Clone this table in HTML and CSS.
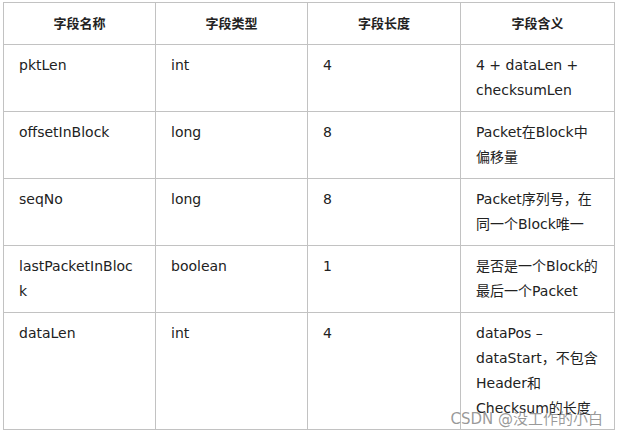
FILE: index.html
```html
<!DOCTYPE html>
<html lang="zh">
<head>
<meta charset="utf-8">
<link rel="stylesheet" href="styles.css">
</head>
<body>
<div class="page">
  <table class="fields">
    <colgroup>
      <col class="c1"><col class="c2"><col class="c3"><col class="c4">
    </colgroup>
    <thead>
      <tr><th>字段名称</th><th>字段类型</th><th>字段长度</th><th>字段含义</th></tr>
    </thead>
    <tbody>
      <tr><td>pktLen</td><td>int</td><td>4</td><td>4 + dataLen + checksumLen</td></tr>
      <tr><td>offsetInBlock</td><td>long</td><td>8</td><td>Packet在Block中偏移量</td></tr>
      <tr><td>seqNo</td><td>long</td><td>8</td><td>Packet序列号，在同一个Block唯一</td></tr>
      <tr><td>lastPacketInBlock</td><td>boolean</td><td>1</td><td>是否是一个Block的最后一个Packet</td></tr>
      <tr><td>dataLen</td><td>int</td><td>4</td><td>dataPos – dataStart，不包含Header和Checksum的长度</td></tr>
    </tbody>
  </table>
  <div class="watermark">CSDN @没工作的小白</div>
</div>
</body>
</html>
```

FILE: styles.css
```css
html, body {
  margin: 0;
  padding: 0;
  background: #fff;
}
.page {
  position: relative;
  padding: 2px 0 0 3px;
  width: 617px;
  height: 434px;
  box-sizing: border-box;
  overflow: hidden;
}
.fields {
  border-collapse: collapse;
  table-layout: fixed;
  width: 611px;
  font-family: "DejaVu Sans", "Noto Sans CJK SC", sans-serif;
  font-size: 14px;
  line-height: 25px;
  color: #222;
}
.c1 { width: 152px; }
.c2 { width: 152px; }
.c3 { width: 153px; }
.c4 { width: 154px; }
.fields th, .fields td {
  border: 1px solid #c2c2c2;
  padding: 8px 15px;
  vertical-align: top;
  overflow-wrap: break-word;
  word-wrap: break-word;
}
.fields th {
  font-weight: bold;
  text-align: center;
  font-size: 13px;
}
.fields td {
  text-align: left;
}
.watermark {
  position: absolute;
  right: 14px;
  bottom: 6px;
  font-family: "DejaVu Sans", "Noto Sans CJK SC", sans-serif;
  font-size: 15px;
  color: rgba(120, 120, 120, 0.75);
  white-space: nowrap;
}
```
